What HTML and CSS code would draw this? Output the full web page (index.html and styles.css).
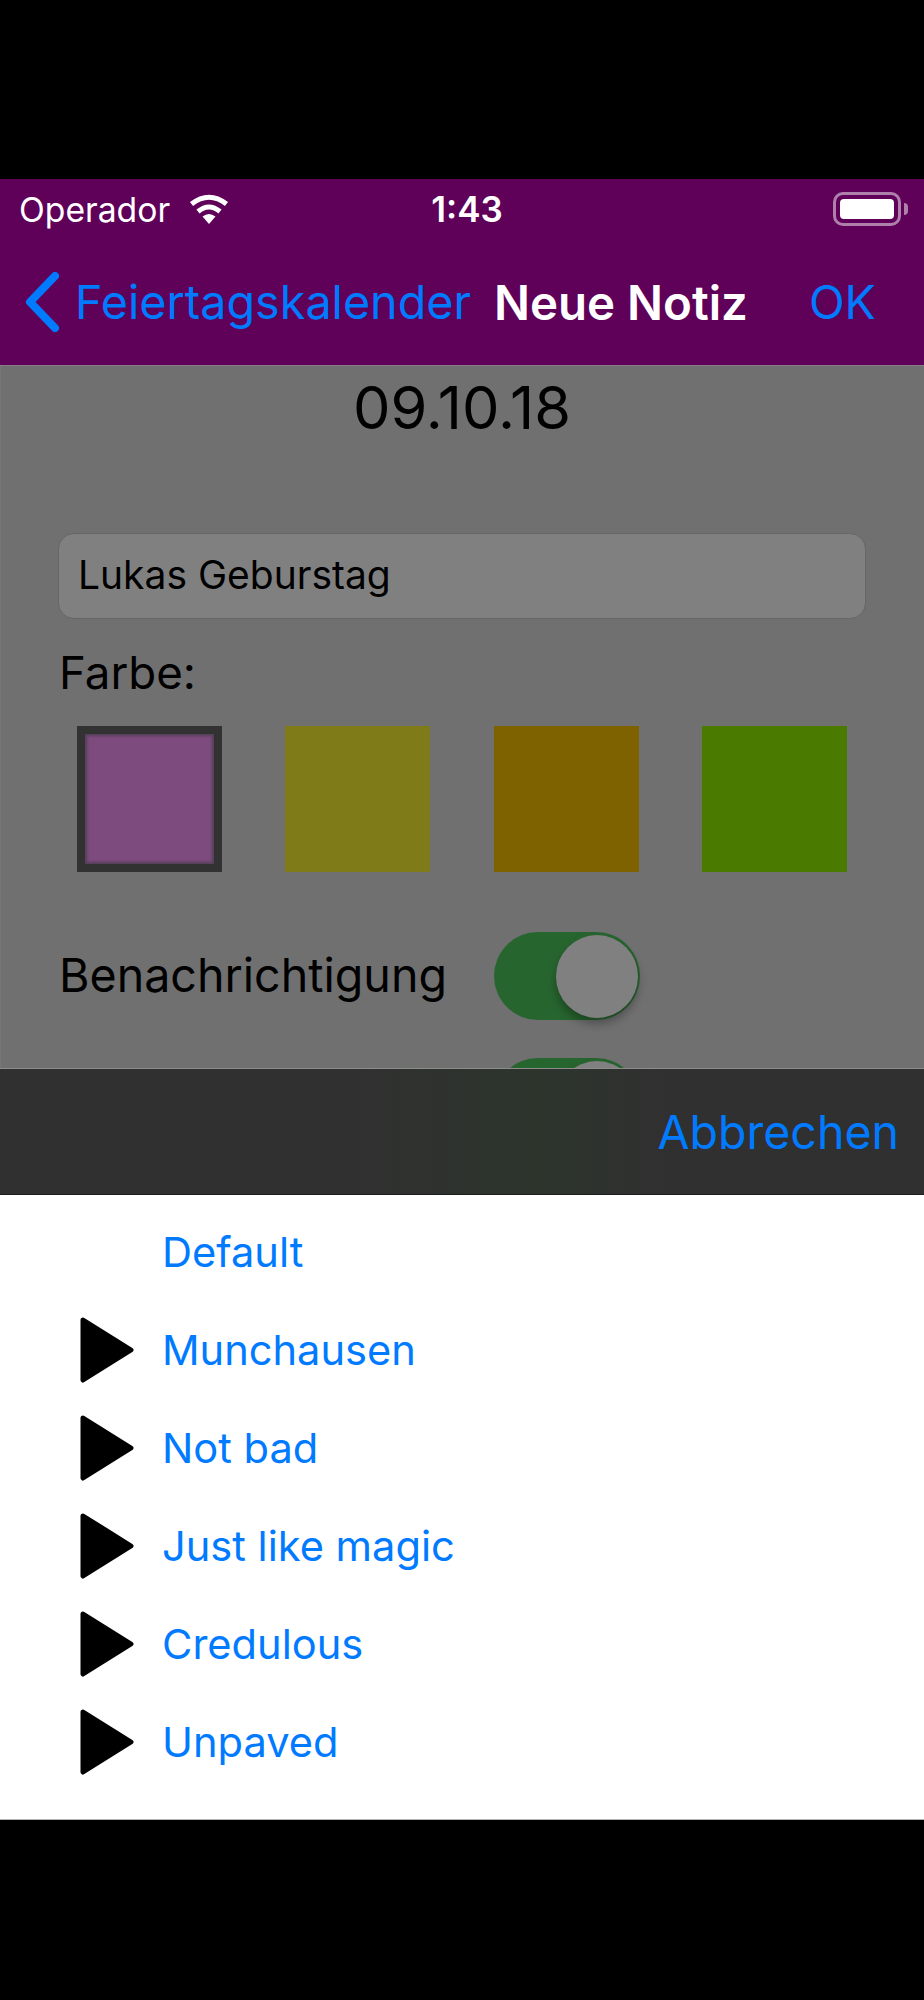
FILE: index.html
```html
<!DOCTYPE html>
<html lang="en">
<head>
	<meta charset="UTF-8">
	<title>Neue Notiz</title>
	<link rel="stylesheet" href="styles.css">
</head>
<body>
	<div class="letterbox-top"></div>
	<header class="app-header">
		<div class="status-bar">
			<div class="status-left">
				<span>Operador</span>
				<svg class="wifi" width="40" height="30" viewBox="0 0 40 30">
					<path d="M20 30 L13.5 22.5 Q20 17.5 26.5 22.5 Z" fill="#fff"/>
					<path d="M9 17.5 Q20 8.5 31 17.5" fill="none" stroke="#fff" stroke-width="5"/>
					<path d="M2.5 10 Q20 -3.5 37.5 10" fill="none" stroke="#fff" stroke-width="5"/>
				</svg>
			</div>
			<span class="status-time">1:43</span>
			<div class="battery">
				<div class="battery-body"><div class="battery-level"></div></div>
				<div class="battery-nub"></div>
			</div>
		</div>
		<nav class="nav-bar">
			<svg class="back-icon" width="36" height="60" viewBox="0 0 36 60">
				<path d="M30 4 L5 30 L30 56" fill="none" stroke="#007aff" stroke-width="8" stroke-linecap="round" stroke-linejoin="round"/>
			</svg>
			<a class="nav-link back-label">Feiertagskalender</a>
			<span class="nav-title">Neue Notiz</span>
			<a class="nav-link nav-ok">OK</a>
		</nav>
	</header>

	<main class="note-form">
		<div class="note-date">09.10.18</div>
		<div class="note-input">Lukas Geburstag</div>
		<div class="form-label color-label">Farbe:</div>
		<div class="swatches">
			<div class="swatch swatch-purple"></div>
			<div class="swatch swatch-yellow"></div>
			<div class="swatch swatch-orange"></div>
			<div class="swatch swatch-green"></div>
		</div>
		<div class="toggle-row">
			<span class="form-label">Benachrichtigung</span>
			<div class="toggle"><div class="toggle-knob"></div></div>
		</div>
		<div class="toggle-row second">
			<span class="form-label"></span>
			<div class="toggle"><div class="toggle-knob"></div></div>
		</div>
	</main>

	<div class="sheet-bar">
		<a class="cancel-link">Abbrechen</a>
	</div>

	<ul class="sound-list">
		<li class="sound-row"><span class="play-slot"></span><a>Default</a></li>
		<li class="sound-row">
			<span class="play-slot"><svg width="54" height="66" viewBox="0 0 54 66"><path d="M3 3 L51 33 L3 63 Z" fill="#000" stroke="#000" stroke-width="5" stroke-linejoin="round"/></svg></span>
			<a>Munchausen</a>
		</li>
		<li class="sound-row">
			<span class="play-slot"><svg width="54" height="66" viewBox="0 0 54 66"><path d="M3 3 L51 33 L3 63 Z" fill="#000" stroke="#000" stroke-width="5" stroke-linejoin="round"/></svg></span>
			<a>Not bad</a>
		</li>
		<li class="sound-row">
			<span class="play-slot"><svg width="54" height="66" viewBox="0 0 54 66"><path d="M3 3 L51 33 L3 63 Z" fill="#000" stroke="#000" stroke-width="5" stroke-linejoin="round"/></svg></span>
			<a>Just like magic</a>
		</li>
		<li class="sound-row">
			<span class="play-slot"><svg width="54" height="66" viewBox="0 0 54 66"><path d="M3 3 L51 33 L3 63 Z" fill="#000" stroke="#000" stroke-width="5" stroke-linejoin="round"/></svg></span>
			<a>Credulous</a>
		</li>
		<li class="sound-row">
			<span class="play-slot"><svg width="54" height="66" viewBox="0 0 54 66"><path d="M3 3 L51 33 L3 63 Z" fill="#000" stroke="#000" stroke-width="5" stroke-linejoin="round"/></svg></span>
			<a>Unpaved</a>
		</li>
	</ul>
</body>
</html>
```

FILE: styles.css
```css
:root {
	--link-color: #007aff;
	--header-bg: #5f0059;
	--dim-bg: #707070;
}

* {
	box-sizing: border-box;
}

body {
	margin: 0;
	height: 2000px;
	overflow: hidden;
	background: #000;
	font-family: Inter, "Liberation Sans", sans-serif;
	color: #000;
}

.letterbox-top {
	height: 179px;
}

.app-header {
	height: 187px;
	background: var(--header-bg);
	border-bottom: 1px solid #8a7f89;
}

.status-bar {
	display: flex;
	align-items: center;
	justify-content: space-between;
	height: 60px;
	padding: 0 16px 0 19px;
	color: #fff;
	font-size: 33.7px;
}

.status-left {
	display: flex;
	align-items: center;
	gap: 19px;
	width: 390px;
}

.status-time {
	font-size: 35px;
	font-weight: 600;
	margin-right: 308px;
}

.battery {
	display: flex;
	align-items: center;
	gap: 3px;
}

.battery-body {
	width: 68px;
	height: 34px;
	padding: 4px;
	border: 3px solid rgba(255, 255, 255, 0.5);
	border-radius: 10px;
}

.battery-level {
	height: 100%;
	background: #fff;
	border-radius: 4px;
}

.battery-nub {
	width: 4px;
	height: 12px;
	background: rgba(255, 255, 255, 0.5);
	border-radius: 0 4px 4px 0;
}

.nav-bar {
	display: flex;
	align-items: center;
	height: 126px;
	padding-left: 25px;
	font-size: 46.7px;
}

.nav-link {
	color: var(--link-color);
}

.back-label {
	margin-left: 14px;
}

.nav-title {
	margin-left: 23px;
	color: #fff;
	font-size: 47.4px;
	font-weight: 600;
}

.nav-ok {
	margin-left: 61px;
}

.note-form {
	height: 702px;
	overflow: hidden;
	background: var(--dim-bg);
	border-left: 1px solid #767676;
	padding: 12px 58px 0 57px;
}

.note-date {
	text-align: center;
	font-size: 59.5px;
	line-height: 58px;
}

.note-input {
	display: flex;
	align-items: center;
	height: 86px;
	margin-top: 97px;
	padding-bottom: 3px;
	padding-left: 19px;
	background: #808080;
	border: 1px solid #666;
	border-radius: 16px;
	font-size: 39px;
}

.form-label {
	font-size: 46.6px;
}

.color-label {
	margin: 26px 0 0 1px;
	font-size: 45.6px;
	line-height: 56px;
}

.swatches {
	display: flex;
	justify-content: space-between;
	margin-top: 25px;
	padding: 0 19px;
}

.swatch {
	width: 145px;
	height: 146px;
}

.swatch-purple {
	background: #7e4b7e;
	border: 8px solid #323232;
	box-shadow: inset 0 0 3px 2px #54405a;
}

.swatch-yellow {
	background: #7e7b18;
}

.swatch-orange {
	background: #7e6200;
}

.swatch-green {
	background: #4b7a00;
}

.toggle-row {
	display: flex;
	align-items: center;
	margin-top: 60px;
	padding-left: 1px;
}

.toggle-row.second {
	margin-top: 38px;
}

.toggle-row .form-label {
	width: 435px;
	padding-bottom: 3px;
}

.toggle {
	display: flex;
	justify-content: flex-end;
	align-items: center;
	width: 146px;
	height: 88px;
	padding-right: 2px;
	background: #27652f;
	border-radius: 44px;
}

.toggle-knob {
	width: 82px;
	height: 83px;
	background: #808080;
	border-radius: 50%;
	box-shadow: 0 6px 10px rgba(0, 0, 0, 0.3);
}

.sheet-bar {
	display: flex;
	align-items: center;
	justify-content: flex-end;
	height: 127px;
	padding-right: 25px;
	background: linear-gradient(90deg, #303030 38%, #2c342c 58%, #303030 72%);
	border-top: 1px solid #8c8c8c;
	border-bottom: 1px solid #1c1c1c;
}

.cancel-link {
	color: var(--link-color);
	font-size: 46.5px;
}

.sound-list {
	height: 625px;
	margin: 0;
	padding: 8px 0 0;
	list-style: none;
	background: #fff;
	border-bottom: 1px solid #b5b5b5;
}

.sound-row {
	display: flex;
	align-items: center;
	height: 98px;
	padding-left: 80px;
	color: var(--link-color);
	font-size: 41.6px;
}

.sound-row a {
	padding-bottom: 1px;
}

.play-slot {
	display: flex;
	width: 83px;
	margin-right: -1px;
}
```
